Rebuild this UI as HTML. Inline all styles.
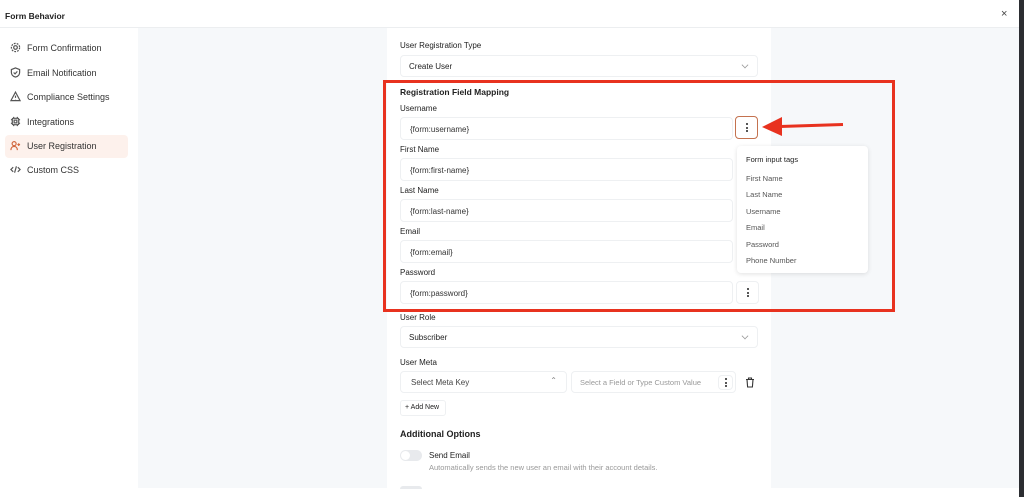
<!DOCTYPE html>
<html><head><style>
*{box-sizing:border-box;margin:0;padding:0}
body{width:1024px;height:497px;overflow:hidden;background:#fff;font-family:"Liberation Sans",sans-serif;color:#1f2328;position:relative}
.a{position:absolute}
.t{font-size:8.5px;color:#222}
.lbl{position:absolute;left:400px;font-size:8px;color:#222;font-weight:500}
.inp{position:absolute;left:400px;width:333px;height:23px;border:1px solid #eef0f2;border-radius:4px;background:#fff;font-size:8px;color:#333;padding:7px 9px}
.sel{position:absolute;left:400px;width:358px;height:22px;border:1px solid #eef0f2;border-radius:4px;font-size:8px;color:#222;padding:6px 8px}
.chev{position:absolute;right:9px;top:6px;width:6px;height:6px;border-right:1px solid #999;border-bottom:1px solid #999;transform:rotate(45deg) scale(.8)}
.dots{position:absolute;width:23px;height:23px;border:1px solid #eef0f2;border-radius:4px;background:#fff}
.dots i,.dots i:before,.dots i:after{position:absolute;width:2px;height:2px;background:#222;border-radius:1px;content:""}
.dots i{left:50%;top:50%;margin:-1px}
.dots i:before{top:-3.5px}.dots i:after{top:3.5px}
.nav{position:absolute;left:10px;font-size:9px;color:#333;display:flex;align-items:center;gap:6px}
.nav svg{width:11px;height:11px;stroke:#555;fill:none;stroke-width:1.3}
.pi{position:absolute;left:746px;font-size:7.5px;color:#555}
</style></head><body>
<div class="a" style="left:0;top:0;width:1024px;height:28px;border-bottom:1px solid #eceef0"></div>
<div class="a t" style="left:5px;top:11px;font-weight:bold;font-size:8.5px">Form Behavior</div>
<div class="a" style="left:1001px;top:8px;font-size:11px;color:#444">×</div>
<div class="a" style="left:1019px;top:0;width:5px;height:497px;background:#2b2d31"></div>
<div class="a" style="left:138px;top:28px;width:881px;height:460px;background:#f6f8fa"></div>
<div class="a" style="left:387px;top:28px;width:384px;height:460px;background:#fff"></div>

<div class="a" style="left:5px;top:135px;width:123px;height:23px;background:#fdf1ec;border-radius:4px"></div>
<div class="nav" style="top:42px"><svg viewBox="0 0 12 12"><circle cx="6" cy="6" r="2"/><circle cx="6" cy="6" r="4.5" stroke-dasharray="2 1.2"/></svg>Form Confirmation</div>
<div class="nav" style="top:67px"><svg viewBox="0 0 12 12"><path d="M6 1l4.5 1.8v3C10.5 8.5 8.5 10.3 6 11 3.5 10.3 1.5 8.5 1.5 5.8v-3z"/><path d="M4 6l1.5 1.5L8 4.8"/></svg>Email Notification</div>
<div class="nav" style="top:91px"><svg viewBox="0 0 12 12"><path d="M6 1.2L11 10.5H1z"/><path d="M6 5v2.5M6 8.8v.3"/></svg>Compliance Settings</div>
<div class="nav" style="top:116px"><svg viewBox="0 0 12 12"><rect x="2.5" y="2.5" width="7" height="7" rx="1"/><rect x="4.5" y="4.5" width="3" height="3"/><path d="M4 1v1.5M8 1v1.5M4 9.5V11M8 9.5V11M1 4h1.5M1 8h1.5M9.5 4H11M9.5 8H11"/></svg>Integrations</div>
<div class="nav" style="top:140px"><svg viewBox="0 0 12 12" style="stroke:#d2683f"><circle cx="4.5" cy="4" r="2.2"/><path d="M1 11c0-2.5 1.5-4 3.5-4s3.5 1.5 3.5 4M9.5 3.5v3M8 5h3"/></svg>User Registration</div>
<div class="nav" style="top:164px"><svg viewBox="0 0 12 12"><path d="M3.5 3.5L1 6l2.5 2.5M8.5 3.5L11 6 8.5 8.5M7 2.5l-2 7"/></svg>Custom CSS</div>

<div class="lbl" style="top:41px">User Registration Type</div>
<div class="sel" style="top:55px">Create User<span class="chev"></span></div>

<div class="a" style="left:383px;top:80px;width:512px;height:232px;border:3px solid #e8321f"></div>
<div class="lbl" style="top:87px;font-size:8.5px;font-weight:bold">Registration Field Mapping</div>
<div class="lbl" style="top:104px">Username</div>
<div class="inp" style="top:117px">{form:username}</div>
<div class="dots" style="left:735px;top:116px;border:1px solid #c4724f"><i></i></div>
<div class="lbl" style="top:145px">First Name</div>
<div class="inp" style="top:158px">{form:first-name}</div>
<div class="lbl" style="top:186px">Last Name</div>
<div class="inp" style="top:199px">{form:last-name}</div>
<div class="lbl" style="top:227px">Email</div>
<div class="inp" style="top:240px">{form:email}</div>
<div class="lbl" style="top:268px">Password</div>
<div class="inp" style="top:281px">{form:password}</div>
<div class="dots" style="left:736px;top:281px"><i></i></div>

<svg class="a" style="left:760px;top:114px" width="84" height="24"><path d="M83 10.5L20 12.5" stroke="#e8321f" stroke-width="3"/><path d="M2 13L22 3v19z" fill="#e8321f"/></svg>

<div class="a" style="left:737px;top:146px;width:131px;height:127px;background:#fff;border-radius:4px;box-shadow:0 1px 5px rgba(0,0,0,.12)"></div>
<div class="pi" style="top:155px;color:#222">Form input tags</div>
<div class="pi" style="top:174px">First Name</div>
<div class="pi" style="top:190px">Last Name</div>
<div class="pi" style="top:207px">Username</div>
<div class="pi" style="top:223px">Email</div>
<div class="pi" style="top:240px">Password</div>
<div class="pi" style="top:256px">Phone Number</div>

<div class="lbl" style="top:313px">User Role</div>
<div class="sel" style="top:326px">Subscriber<span class="chev"></span></div>
<div class="lbl" style="top:358px">User Meta</div>
<div class="sel" style="top:371px;width:167px;padding-left:10px;color:#444">Select Meta Key<span style="position:absolute;right:9px;top:4px;font-size:8px;color:#888">⌃</span></div>
<div class="sel" style="top:371px;left:571px;width:165px;color:#999;font-size:7.5px">Select a Field or Type Custom Value</div>
<div class="dots" style="left:718px;top:375px;width:15px;height:15px"><i></i></div>
<svg class="a" style="left:745px;top:377px" width="10" height="11" fill="none" stroke="#333" stroke-width="1.1"><path d="M1 2.5h8M3.5 2.5V1h3v1.5M2 2.5l.6 7.5h4.8L8 2.5"/></svg>
<div class="a" style="left:400px;top:400px;width:46px;height:16px;border:1px solid #eef0f2;border-radius:3px;font-size:7px;color:#222;padding:3px 4px">+ Add New</div>
<div class="lbl" style="top:429px;font-size:9px;font-weight:bold">Additional Options</div>
<div class="a" style="left:400px;top:450px;width:22px;height:11px;border-radius:6px;background:#e8eaed"><div style="position:absolute;left:1px;top:1px;width:9px;height:9px;border-radius:50%;background:#fff"></div></div>
<div class="a" style="left:429px;top:451px;font-size:8px;color:#222">Send Email</div>
<div class="a" style="left:429px;top:463px;font-size:7.5px;color:#999">Automatically sends the new user an email with their account details.</div>
<div class="a" style="left:400px;top:486px;width:22px;height:3px;border-radius:3px 3px 0 0;background:#e8eaed"></div>
</body></html>
